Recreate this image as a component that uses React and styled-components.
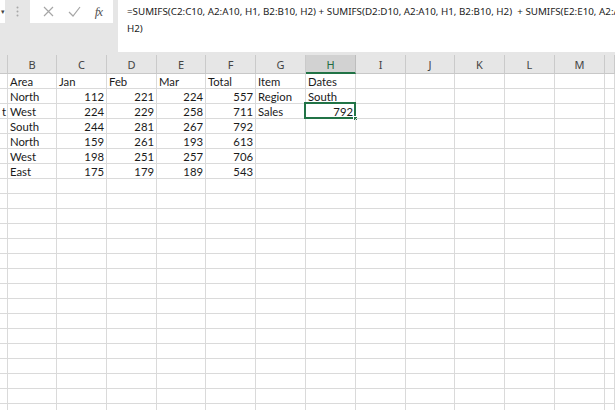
import React from "react";
import styled, { createGlobalStyle } from "styled-components";

const Global = createGlobalStyle`
  html, body { margin: 0; padding: 0; background: #ffffff; }
  body { overflow: hidden; }
`;

const Window = styled.div`
  width: 615px;
  height: 410px;
  overflow: hidden;
  display: flex;
  flex-direction: column;
  background: #ffffff;
`;

const FormulaArea = styled.div`
  height: 55px;
  flex: none;
  background: #e6e6e6;
  display: flex;
  align-items: flex-start;
`;

const NameBoxStub = styled.div`
  width: 5px;
  height: 23px;
  background: #ffffff;
  display: flex;
  align-items: center;
  justify-content: flex-end;
  color: #444;
  font: 7px "Liberation Sans", sans-serif;
`;

const Grip = styled.div`
  width: 25px;
  height: 23px;
  display: flex;
  align-items: center;
  justify-content: center;
`;

const IconBox = styled.div`
  width: 83px;
  height: 23px;
  background: #ffffff;
  display: flex;
  align-items: center;
  justify-content: space-around;
  padding: 0 4px 0 6px;
  box-sizing: border-box;
`;

const Fx = styled.span`
  font: italic 13px "Liberation Serif", serif;
  color: #555;
  letter-spacing: -1px;
`;

const FormulaBox = styled.div`
  flex: 1;
  min-width: 0;
  height: 52px;
  margin-left: 5px;
  background: #ffffff;
  box-sizing: border-box;
  padding: 3px 0 0 9px;
  font: 9.8px/17px "Noto Sans", "Open Sans", sans-serif;
  color: #222;
  overflow: hidden;
`;

const FormulaLine = styled.div`
  white-space: pre;
`;

const Sheet = styled.div`
  flex: 1;
  display: grid;
  grid-template-columns: 8px 49px 50px 50px 49px 50px 50px 50px 50px 49px 50px 50px 50px 1fr;
  grid-auto-rows: 15px;
  grid-template-rows: 19px;
  overflow: hidden;
  font: 11.3px/15px "Lato", "Liberation Sans", sans-serif;
  color: #1a1a1a;
`;

const ColHead = styled.div`
  background: ${(p) => (p.$active ? "#d2d2d2" : "#e6e6e6")};
  border-right: 1px solid ${(p) => (p.$active ? "#bdbdbd" : "#cacaca")};
  border-bottom: ${(p) => (p.$active ? "2px solid #217346" : "1px solid #c8c8c8")};
  box-sizing: border-box;
  display: flex;
  align-items: center;
  justify-content: center;
  font: 11px "Noto Sans", "Open Sans", sans-serif;
  color: ${(p) => (p.$active ? "#1e6b41" : "#444")};
  padding-top: 1px;
`;

const Cell = styled.div`
  position: relative;
  border-right: 1px solid #dadada;
  border-bottom: 1px solid #dadada;
  box-sizing: border-box;
  padding: 0 2px;
  text-align: ${(p) => (p.$num ? "right" : "left")};
  white-space: nowrap;
  overflow: ${(p) => (p.$selected ? "visible" : "hidden")};
  line-height: 15px;
`;

const Selection = styled.div`
  position: absolute;
  left: -2px;
  top: -2px;
  right: -1px;
  bottom: -1px;
  border: 2px solid #217346;
  pointer-events: none;
`;

const Handle = styled.div`
  position: absolute;
  right: -4px;
  bottom: -4px;
  width: 5px;
  height: 5px;
  background: #217346;
  border: 1px solid #ffffff;
  box-sizing: border-box;
`;

const letters = ["", "B", "C", "D", "E", "F", "G", "H", "I", "J", "K", "L", "M", ""];

const data = [
  ["", "Area", "Jan", "Feb", "Mar", "Total", "Item", "Dates"],
  ["", "North", 112, 221, 224, 557, "Region", "South"],
  ["t", "West", 224, 229, 258, 711, "Sales", 792],
  ["", "South", 244, 281, 267, 792],
  ["", "North", 159, 261, 193, 613],
  ["", "West", 198, 251, 257, 706],
  ["", "East", 175, 179, 189, 543],
];

const TOTAL_ROWS = 23;

export default function App() {
  const rows = [];
  for (let r = 0; r < TOTAL_ROWS; r++) {
    const row = data[r] || [];
    for (let c = 0; c < letters.length; c++) {
      const v = row[c];
      const num = typeof v === "number" || (c === 0 && v);
      const selected = r === 2 && c === 7;
      rows.push(
        <Cell key={`${r}-${c}`} $num={num} $selected={selected}>
          {v === undefined ? "" : v}
          {selected && (
            <Selection>
              <Handle />
            </Selection>
          )}
        </Cell>
      );
    }
  }

  return (
    <>
      <Global />
      <Window>
        <FormulaArea>
          <NameBoxStub>▾</NameBoxStub>
          <Grip>
            <svg width="3" height="11" viewBox="0 0 3 11">
              <circle cx="1.5" cy="1.5" r="1" fill="#a8a8a8" />
              <circle cx="1.5" cy="5.5" r="1" fill="#a8a8a8" />
              <circle cx="1.5" cy="9.5" r="1" fill="#a8a8a8" />
            </svg>
          </Grip>
          <IconBox>
            <svg width="11" height="11" viewBox="0 0 11 11">
              <path d="M1 1 L10 10 M10 1 L1 10" stroke="#a6a6a6" strokeWidth="1.2" fill="none" />
            </svg>
            <svg width="13" height="11" viewBox="0 0 13 11">
              <path d="M1 6 L5 10 L12 1" stroke="#a6a6a6" strokeWidth="1.2" fill="none" />
            </svg>
            <Fx>fx</Fx>
          </IconBox>
          <FormulaBox>
            <FormulaLine>
              {"=SUMIFS(C2:C10, A2:A10, H1, B2:B10, H2) + SUMIFS(D2:D10, A2:A10, H1, B2:B10, H2)  + SUMIFS(E2:E10, A2:A10, H1, B2:B10,"}
            </FormulaLine>
            <FormulaLine>H2)</FormulaLine>
          </FormulaBox>
        </FormulaArea>
        <Sheet>
          {letters.map((l, i) => (
            <ColHead key={`h${i}`} $active={l === "H"}>
              {l}
            </ColHead>
          ))}
          {rows}
        </Sheet>
      </Window>
    </>
  );
}
